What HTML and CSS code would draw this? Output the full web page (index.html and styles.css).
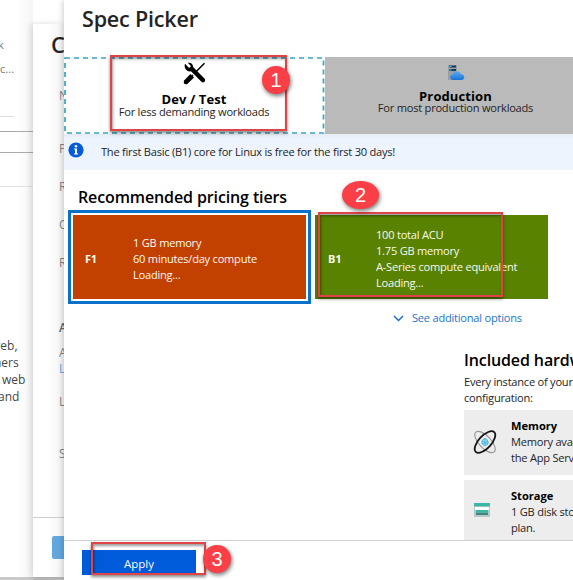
FILE: index.html
```html
<!DOCTYPE html>
<html lang="en">
<head>
<meta charset="utf-8">
<title>Spec Picker</title>
<link rel="stylesheet" href="styles.css">
</head>
<body>
<main class="portal">
  <aside class="page">
    <div class="page-tools"><p>k</p><p>c...</p></div>
    <div class="page-rule"></div>
    <div class="page-box"></div>
    <div class="page-divider"></div>
    <div class="page-copy"><p class="c1">web,</p><p class="c2">ners</p><p class="c3">web</p><p class="c4">and</p></div>
  </aside>
  <section class="blade">
    <h2 class="blade-title">C</h2>
    <div class="fields">
      <p>N</p><p>P</p><p>R</p><p>O</p><p>R</p>
      <p class="strong">A</p><p>A</p><p class="link">L</p><p>L</p><p>S</p>
    </div>
    <footer class="blade-foot"><span class="blade-button"></span></footer>
  </section>
  <section class="picker">
    <h1><span>Spec Picker</span></h1>
    <nav class="tabs">
      <div class="tab active">
        <svg class="frame" width="261" height="77" viewBox="0 0 261 77"><rect x="1" y="1" width="258.5" height="75" fill="none" stroke="#36a5be" stroke-width="1.7" stroke-dasharray="5 4"/></svg>
        <svg class="tools" width="24" height="24" viewBox="0 0 24 24">
          <path d="M3 1.8 7.1 6 9 4.2 5.8.8C9 .1 11.2 2.1 11.1 5.1L18 12l1.5 1.5 3 3.1c2 2.2-.9 5.2-3.1 3.1L9 9.3C5.5 10.4 1.4 6.4 3 1.8z"/>
          <path d="M22.5 1.2 13 10.8M11 13l-7 7" fill="none" stroke="#000" stroke-width="1.5"/>
          <path d="m8.4 12 3.6 3.5-6.4 6.2c-2.8 1.5-4.7-.5-3.5-3.2z"/>
        </svg>
        <h3><span>Dev / Test</span></h3>
        <p><span>For less demanding workloads</span></p>
      </div>
      <div class="tab production">
        <svg width="18" height="18" viewBox="0 0 18 18">
          <defs><linearGradient id="cloud" x2="0" y2="1"><stop stop-color="#5eaaf2"/><stop offset="1" stop-color="#1775d8"/></linearGradient></defs>
          <path fill="#98a0a6" d="M1 1h9v15H1z"/><path fill="#17375c" d="M2.5 1.5H9v2H2.5zM2.5 5H9v2H2.5z"/><path fill="#42c6dd" d="M3 2h1.5v1H3zM3 5.5h1.5v1H3z"/>
          <path fill="url(#cloud)" d="M6.3 16C2 16 2.2 10.8 6 10.5 7 6.4 12.8 6 14 10.2c4.5.2 4.2 5.8.3 5.8z"/>
        </svg>
        <h3><span>Production</span></h3>
        <p><span>For most production workloads</span></p>
      </div>
    </nav>
    <div class="notice">
      <svg width="16" height="16" viewBox="0 0 16 16"><circle cx="8" cy="8" r="7.6" fill="#015cda"/><circle cx="8" cy="4.2" r="1.3" fill="#fff"/><path d="M6 6.5h3v5h1.2v1H6v-1h1v-4H6z" fill="#fff"/></svg>
      <span>The first Basic (B1) core for Linux is free for the first 30 days!</span>
    </div>
    <h2 class="tiers-title"><span>Recommended pricing tiers</span></h2>
    <div class="tiers">
      <article class="tier free"><b>F1</b><ul><li><span>1 GB memory</span></li><li><span>60 minutes/day compute</span></li><li><span>Loading...</span></li></ul></article>
      <article class="tier basic"><b>B1</b><ul><li><span>100 total ACU</span></li><li><span>1.75 GB memory</span></li><li><span>A-Series compute equivalent</span></li><li><span>Loading...</span></li></ul></article>
    </div>
    <a class="more"><svg width="11" height="7" viewBox="0 0 11 7"><path d="m1 1 4.5 4.5L10 1" fill="none" stroke="#1767d2" stroke-width="1.4"/></svg><span>See additional options</span></a>
    <section class="hardware">
      <h2><span>Included hardware</span></h2>
      <p class="intro">Every instance of your App Service plan<br>configuration:</p>
      <article class="feature">
        <svg class="atom" width="26" height="26" viewBox="0 0 26 26" fill="none"><ellipse cx="13" cy="13" rx="13.5" ry="6" transform="rotate(47 13 13)" stroke="#999" stroke-width="1.2"/><ellipse cx="13" cy="13" rx="13.5" ry="6.3" transform="rotate(-47 13 13)" stroke="#151515" stroke-width="1.8"/><circle cx="13" cy="13" r="3.4" fill="#a6dcf1"/><path d="m10 12 3-3 3 3v3l-3 2-3-2zm0 0 6 3m0-3-6 3m3-6v8" stroke="#43aed5" stroke-width=".8"/></svg>
        <div><b>Memory</b><p>Memory available to run</p><p>the App Service plan.</p></div>
      </article>
      <article class="feature">
        <svg class="disk" width="16" height="14" viewBox="0 0 16 14"><path fill="#b8c7c9" d="M0 2h16v12H0z"/><path fill="#fff" d="M1 4h14v3H1z"/><path fill="#3bb8a5" d="M0 0h16v3.3H0zM2 7h12v2.8H2z"/><path fill="#45847e" d="M2 9.8h12V12H2z"/></svg>
        <div><b>Storage</b><p>1 GB disk storage shared</p><p>plan.</p></div>
      </article>
    </section>
    <footer class="picker-foot"><button><span>Apply</span></button></footer>
  </section>
  <i class="outline o1"></i><i class="outline o2"></i><i class="outline o3"></i>
  <b class="badge b1">1</b><b class="badge b2">2</b><b class="badge b3">3</b>
</main>
</body>
</html>
```
FILE: styles.css
```css
* { box-sizing: border-box; }
body, h1, h2, h3, p, ul { margin: 0; padding: 0; }
body { overflow: hidden; background: #fff; font: 11.1px/16px "Open Sans", "Noto Sans", sans-serif; letter-spacing: -.24px; color: #242424; }
ul { list-style: none; }
svg { display: block; flex: none; }
.portal { position: relative; display: flex; width: 573px; height: 580px; overflow: hidden; white-space: nowrap; }
.page { display: flex; flex-direction: column; width: 33px; height: 577px; box-shadow: 0 3px #c9c9c9; background: linear-gradient(90deg, #fff 50%, #f5f5f5); letter-spacing: 0; }
.page-tools { height: 116px; padding-top: 37px; color: #777; }
.page-tools p { height: 24px; margin-left: -2px; }
.page-tools p + p { margin-left: 0; }
.page-rule { width: 14px; height: 15px; border-top: 1px solid #ddd; }
.page-box { height: 22px; border: solid #aaa; border-width: 1px 0; }
.page-divider { height: 184px; margin-top: 33px; border-top: 1px solid #e2e2e2; }
.page-copy { margin-top: -33px; font-size: 12px; line-height: 17px; color: #454545; }
.c1 { margin-left: -9px; }
.c2 { margin-left: -6px; }
.c3 { margin-left: 2px; }
.c4 { margin-left: -2px; }
.blade { display: flex; flex-direction: column; width: 31px; height: 553px; margin-top: 24px; overflow: hidden; background: linear-gradient(90deg, #fff 45%, #f3f3f3); box-shadow: -2px 0 6px #0002, 0 3px #bbb; }
.blade-title { height: 64px; padding: 8px 0 0 18px; font-size: 22px; line-height: 24px; font-weight: 600; }
.fields { height: 429px; padding-left: 26px; color: #858585; font-size: 12px; line-height: 16px; }
.fields p { margin-bottom: 22px; }
.fields p:first-child { margin-bottom: 37px; }
.fields p:nth-child(5) { margin-bottom: 49px; }
.fields .strong { margin-bottom: 9px; color: #666; font-weight: 600; }
.fields p:nth-child(7) { margin-bottom: 0; }
.fields .link { margin-bottom: 17px; color: #64a9dd; }
.fields p:nth-child(9) { margin-bottom: 36px; }
.blade-foot { flex: 1; padding: 18px 0 0 19px; border-top: 1px solid #ccc; }
.blade-button { display: block; height: 23px; background: #62a8df; border-radius: 2px 0 0 2px; }
.picker { display: flex; flex-direction: column; width: 509px; height: 580px; overflow: hidden; background: #fff; box-shadow: -1px 0 6px #0003; }
.picker h1 { flex: none; height: 57px; padding: 5px 0 0 18px; font-size: 21.5px; line-height: 28px; font-weight: 600; letter-spacing: -.18px; }
.tabs { display: flex; flex: none; height: 77px; }
.tab { position: relative; display: flex; flex-direction: column; align-items: center; flex: none; width: 261px; }
.tab.active { padding: 5px 1px 0 0; }
.frame { position: absolute; inset: 0 auto auto 0; }
.tools { margin-right: 1px; }
.tab h3 { margin-top: 6px; font-size: 13px; line-height: 14px; font-weight: 700; letter-spacing: .1px; color: #000; }
.tab p { line-height: 12px; }
.production { padding-top: 7px; background: #bababa; }
.production h3 { margin-top: 7px; }
.production p { margin-top: -1px; }
.notice { display: flex; flex: none; align-items: flex-start; gap: 17px; height: 36px; padding: 8px 0 0 4px; background: linear-gradient(#e6ecf6, #eef4fe 5px); }
.notice span { margin-top: 2px; }
.tiers-title { flex: none; height: 40px; padding: 17px 0 0 14px; font-size: 16px; line-height: 20px; font-weight: 600; letter-spacing: -.12px; color: #000; }
.tiers { display: flex; flex: none; gap: 4px; height: 94px; padding-left: 4px; }
.tier { display: flex; align-items: center; color: #f9f9f0; }
.tier b { width: 48px; font-size: 11px; }
.free { width: 243px; height: 94px; padding: 3px 0 0 14px; background: #c34100; border: 3px solid #0b70c9; outline: 2px solid #fff; outline-offset: -5px; }
.basic { width: 233px; height: 84px; margin-top: 5px; padding: 3px 0 0 13px; background: #598200; }
.more { display: flex; flex: none; align-items: center; gap: 8px; height: 16px; margin: 6px 0 0 329px; color: #2375ca; }
.hardware { flex: none; height: 214px; padding: 24px 0 0 400px; overflow: hidden; }
.hardware h2 { height: 24px; font-size: 16px; line-height: 20px; font-weight: 600; letter-spacing: -.12px; color: #000; }
.intro { height: 36px; }
.feature { display: flex; align-items: center; height: 65px; margin-bottom: 5px; padding-left: 8px; background: #ededed; }
.feature div { padding: 0 0 2px 13px; }
.feature b { color: #000; letter-spacing: 0; }
.atom { margin-bottom: 2px; }
.disk { margin: 0 5px 6px 2px; }
.disk + div { padding-left: 16px; }
.picker-foot { flex: none; height: 40px; padding: 9px 0 0 18px; border-top: 1px solid #d1d1d1; }
button { display: block; width: 114px; height: 25px; padding: 3px 0 0; border: 0; background: #005bda; color: #fff; font: 500 11.5px/20px "Open Sans", sans-serif; }
.outline { position: absolute; border: 2px solid #df4447; box-shadow: 0 2px 3px #0007, inset 1px 2px 3px #0006; }
.o1 { left: 110px; top: 55px; width: 177px; height: 76px; }
.o2 { left: 318px; top: 212px; width: 185px; height: 85px; }
.o3 { left: 91px; top: 542px; width: 115px; height: 33px; }
.badge { position: absolute; display: grid; place-items: center; width: 28px; height: 28px; border-radius: 50%; background: #fb3f46; box-shadow: 1px 2px 4px #0008; color: #fff; font: 20px "Liberation Sans", sans-serif; }
.b1 { left: 262px; top: 66px; }
.b2 { left: 342px; top: 181px; width: 37px; }
.b3 { left: 203px; top: 545px; }
```
